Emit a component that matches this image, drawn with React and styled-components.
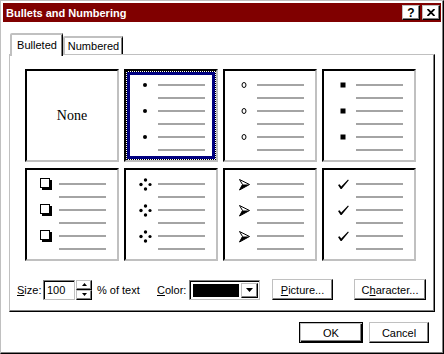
import React from "react";
import styled, { createGlobalStyle, css } from "styled-components";

const GlobalStyle = createGlobalStyle`
  html, body { margin: 0; padding: 0; background: #fff; }
  body {
    font-family: "Liberation Sans", Arial, sans-serif;
    font-size: 11px;
    color: #000;
  }
  * { box-sizing: border-box; }
`;

const raised = css`
  background: #fff;
  border: 1px solid;
  border-color: #c0c0c0 #000 #000 #c0c0c0;
  box-shadow: inset -1px -1px 0 #808080;
`;

const sunken = css`
  background: #fff;
  border: 1px solid;
  border-color: #808080 #c0c0c0 #c0c0c0 #808080;
  box-shadow: inset 1px 1px 0 #000;
`;

const Dialog = styled.div`
  width: 444px;
  height: 354px;
  display: flex;
  flex-direction: column;
  background: #fff;
  border: 1px solid;
  border-color: #c0c0c0 #000 #000 #c0c0c0;
  box-shadow: inset -1px -1px 0 #808080;
  padding: 2px;
`;

const TitleBar = styled.div`
  flex: none;
  height: 19px;
  display: flex;
  align-items: center;
  justify-content: space-between;
  padding: 0 1px 0 3px;
  background: #800000;
`;

const TitleText = styled.span`
  color: #fff;
  font-weight: bold;
  font-size: 11px;
`;

const TitleButtons = styled.div`
  display: flex;
  gap: 2px;
`;

const TitleButton = styled.button`
  ${raised};
  width: 18px;
  height: 15px;
  padding: 0;
  display: flex;
  align-items: center;
  justify-content: center;
  font: bold 12px "Liberation Sans", Arial, sans-serif;
  color: #000;
`;

const Body = styled.div`
  flex: 1;
  display: flex;
  flex-direction: column;
  padding: 11px 6px 0 6px;
`;

const TabRow = styled.div`
  position: relative;
  z-index: 1;
  height: 21px;
  display: flex;
  align-items: flex-end;
  padding-left: 1px;
`;

const Tab = styled.div`
  width: ${(p) => p.$width}px;
  height: ${(p) => (p.$active ? 23 : 18)}px;
  margin-bottom: ${(p) => (p.$active ? -2 : 0)}px;
  padding-bottom: ${(p) => (p.$active ? 2 : 0)}px;
  display: flex;
  align-items: center;
  justify-content: center;
  background: #fff;
  border-style: solid;
  border-width: 2px 1px 0 2px;
  border-color: #c0c0c0 #000 transparent #c0c0c0;
  border-top-left-radius: 2px;
  box-shadow: inset -1px 0 0 #808080;
`;

const Panel = styled.div`
  height: 258px;
  display: flex;
  flex-direction: column;
  border: 1px solid;
  border-color: #c0c0c0 #000 #000 #c0c0c0;
  box-shadow: inset -1px -1px 0 #808080;
`;

const TileGrid = styled.div`
  margin: 14px 0 0 15px;
  display: grid;
  grid-template-columns: repeat(4, 94px);
  grid-auto-rows: 93px;
  column-gap: 5px;
  row-gap: 6px;
`;

const Tile = styled.div`
  display: flex;
  background: #fff;
  border: 2px solid;
  border-color: #000 #c0c0c0 #c0c0c0 #000;
`;

const TileInner = styled.div`
  flex: 1;
  margin: 1px;
  display: flex;
  flex-direction: column;
  gap: 11px;
  padding-top: 9px;
  border: 3px solid ${(p) => (p.$selected ? "#000080" : "transparent")};
  outline: ${(p) => (p.$selected ? "1px dotted #000" : "none")};
`;

const NoneLabel = styled.div`
  flex: 1;
  display: flex;
  align-items: center;
  justify-content: center;
  margin-top: -9px;
  font-family: "Liberation Serif", "Times New Roman", serif;
  font-size: 14px;
`;

const Row = styled.div`
  height: 2px;
  display: flex;
  align-items: center;
`;

const BulletCell = styled.div`
  width: 28px;
  padding-left: 9px;
  display: flex;
  align-items: center;
`;

const Rule = styled.div`
  width: 47px;
  height: 2px;
  background: #a4a4a4;
`;

const Controls = styled.div`
  margin-top: 18px;
  height: 21px;
  display: grid;
  grid-template-columns: 26px 33px 21px 60px 32px 83px 82px 72px;
  align-items: center;
  padding-left: 7px;
`;

const FieldLabel = styled.span`
  white-space: nowrap;
`;

const NumberBox = styled.div`
  ${sunken};
  width: 32px;
  height: 20px;
  display: flex;
  align-items: center;
  padding-left: 3px;
`;

const Spinner = styled.div`
  width: 16px;
  height: 20px;
  display: flex;
  flex-direction: column;
`;

const SpinButton = styled.div`
  ${raised};
  flex: 1;
  display: flex;
  align-items: center;
  justify-content: center;
`;

const Combo = styled.div`
  ${sunken};
  width: 71px;
  height: 20px;
  display: flex;
  padding: 2px 1px 1px 2px;
  gap: 2px;
`;

const Swatch = styled.div`
  flex: 1;
  background: #000;
  margin: 1px 0 1px 1px;
`;

const DropButton = styled.div`
  ${raised};
  width: 17px;
  display: flex;
  align-items: center;
  justify-content: center;
`;

const PushButton = styled.button`
  ${raised};
  width: ${(p) => p.$width}px;
  height: 21px;
  padding: 0;
  font: 11px "Liberation Sans", Arial, sans-serif;
  color: #000;
  ${(p) =>
    p.$default &&
    css`
      border-color: #000;
      box-shadow: inset 1px 1px 0 #c0c0c0, inset -1px -1px 0 #000,
        inset -2px -2px 0 #808080;
    `}
`;

const Footer = styled.div`
  display: flex;
  justify-content: flex-end;
  gap: 6px;
  padding: 10px 6px 0 0;
`;

const Bullet = ({ kind }) => {
  switch (kind) {
    case "dot":
      return (
        <svg width="12" height="12" viewBox="0 0 12 12">
          <circle cx="6" cy="6" r="2" />
        </svg>
      );
    case "circle":
      return (
        <svg width="12" height="12" viewBox="0 0 12 12">
          <ellipse cx="6" cy="6" rx="2" ry="2.5" fill="none" stroke="#000" strokeWidth="1" />
        </svg>
      );
    case "square":
      return (
        <svg width="12" height="12" viewBox="0 0 12 12">
          <rect x="3.5" y="3.5" width="5" height="5" />
        </svg>
      );
    case "box":
      return (
        <svg width="13" height="13" viewBox="0 0 13 13">
          <rect x="0.5" y="0.5" width="9" height="9" fill="#fff" stroke="#000" />
          <rect x="10" y="2" width="2" height="10" />
          <rect x="2" y="10" width="10" height="2" />
        </svg>
      );
    case "diamond":
      return (
        <svg width="13" height="13" viewBox="0 0 13 13">
          <circle cx="6.5" cy="2" r="1.7" />
          <circle cx="2" cy="6.5" r="1.7" />
          <circle cx="11" cy="6.5" r="1.6" />
          <circle cx="6.5" cy="11" r="1.7" />
        </svg>
      );
    case "arrow":
      return (
        <svg width="13" height="13" viewBox="0 0 13 13">
          <path d="M1.5 1.5 L11.5 6.5 L1.5 12 L4.5 6.5 Z" fill="#fff" stroke="#000" strokeWidth="1" />
          <path d="M4.5 6.5 L11.5 6.5 L1.5 12 Z" fill="#000" />
        </svg>
      );
    case "check":
      return (
        <svg width="13" height="13" viewBox="0 0 13 13">
          <path d="M1 7 L2.6 6.3 L4.2 8.6 L11 1.5 L11.8 2.2 L4.6 11 L3.6 11 Z" />
        </svg>
      );
    default:
      return null;
  }
};

const TILES = [
  { kind: "none" },
  { kind: "dot", selected: true },
  { kind: "circle" },
  { kind: "square" },
  { kind: "box" },
  { kind: "diamond" },
  { kind: "arrow" },
  { kind: "check" },
];

const BulletTile = ({ kind, selected }) => (
  <Tile>
    <TileInner $selected={selected}>
      {kind === "none" ? (
        <NoneLabel>None</NoneLabel>
      ) : (
        [0, 1, 2, 3, 4, 5].map((i) => (
          <Row key={i}>
            <BulletCell>{i % 2 === 0 && <Bullet kind={kind} />}</BulletCell>
            <Rule />
          </Row>
        ))
      )}
    </TileInner>
  </Tile>
);

const Arrow = ({ dir, w = 5 }) => {
  const h = Math.ceil(w / 2);
  const d = dir === "up" ? `M0 ${h} L${w / 2} 0 L${w} ${h} Z` : `M0 0 L${w} 0 L${w / 2} ${h} Z`;
  return (
    <svg width={w} height={h} viewBox={`0 0 ${w} ${h}`}>
      <path d={d} fill="#000" />
    </svg>
  );
};

export default function App() {
  return (
    <>
      <GlobalStyle />
      <Dialog>
        <TitleBar>
          <TitleText>Bullets and Numbering</TitleText>
          <TitleButtons>
            <TitleButton>?</TitleButton>
            <TitleButton>
              <svg width="8" height="7" viewBox="0 0 8 7">
                <path d="M0.5 0 L7.5 7 M7.5 0 L0.5 7" stroke="#000" strokeWidth="1.8" />
              </svg>
            </TitleButton>
          </TitleButtons>
        </TitleBar>
        <Body>
          <TabRow>
            <Tab $active $width={53}>Bulleted</Tab>
            <Tab $width={60}>Numbered</Tab>
          </TabRow>
          <Panel>
            <TileGrid>
              {TILES.map((t) => (
                <BulletTile key={t.kind} kind={t.kind} selected={t.selected} />
              ))}
            </TileGrid>
            <Controls>
              <FieldLabel>
                <u>S</u>ize:
              </FieldLabel>
              <NumberBox>100</NumberBox>
              <Spinner>
                <SpinButton>
                  <Arrow dir="up" />
                </SpinButton>
                <SpinButton>
                  <Arrow dir="down" />
                </SpinButton>
              </Spinner>
              <FieldLabel>% of text</FieldLabel>
              <FieldLabel>
                <u>C</u>olor:
              </FieldLabel>
              <Combo>
                <Swatch />
                <DropButton>
                  <Arrow dir="down" w={7} />
                </DropButton>
              </Combo>
              <PushButton $width={61}>
                <u>P</u>icture...
              </PushButton>
              <PushButton $width={72}>
                C<u>h</u>aracter...
              </PushButton>
            </Controls>
          </Panel>
          <Footer>
            <PushButton $default $width={64}>OK</PushButton>
            <PushButton $width={60}>Cancel</PushButton>
          </Footer>
        </Body>
      </Dialog>
    </>
  );
}
